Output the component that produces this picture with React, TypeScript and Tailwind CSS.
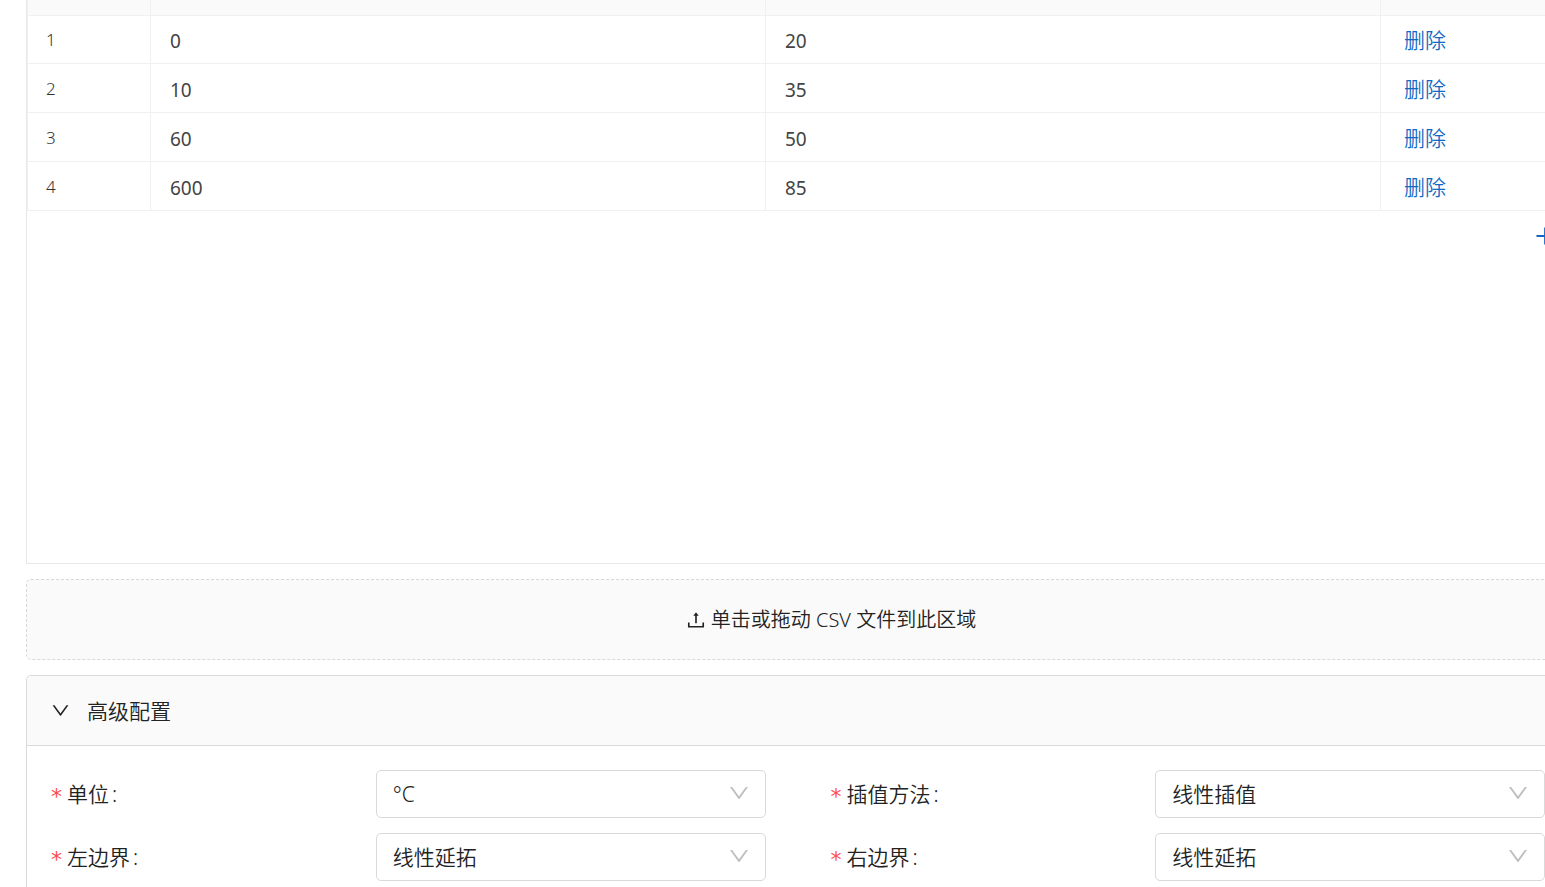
import { useState } from "react";
import { AiOutlineDown, AiOutlinePlus, AiOutlineUpload } from "react-icons/ai";

type Row = { id: number; x: string; y: string };

const initialRows: Row[] = [
  { id: 1, x: "0", y: "20" },
  { id: 2, x: "10", y: "35" },
  { id: 3, x: "60", y: "50" },
  { id: 4, x: "600", y: "85" },
];

const cell = "border-r border-b border-[#f0f0f0] p-0 text-left align-bottom";

function SelectField({ id, label, options }: { id: string; label: string; options: string[] }) {
  return (
    <div className="grid grid-cols-12 items-center">
      <label htmlFor={id} className="col-span-5 flex items-center text-[21px] leading-8">
        <span className="w-4 pt-1.5 font-['DejaVu_Sans'] text-[22px] leading-6 font-normal text-[#ff4d4f]">*</span>
        <span>{label}</span>
        <span className="pl-[3px]">:</span>
      </label>
      <div className="relative col-span-6">
        <select
          id={id}
          className="block h-12 w-full appearance-none rounded-[5px] border border-[#d9d9d9] bg-white pt-0.5 pr-12 pl-4 text-[21px]"
        >
          {options.map((o) => (
            <option key={o}>{o}</option>
          ))}
        </select>
        <AiOutlineDown className="pointer-events-none absolute top-[11px] right-[15px] size-6 text-[#bfbfbf]" />
      </div>
    </div>
  );
}

export default function App() {
  const [rows, setRows] = useState(initialRows);
  const [open, setOpen] = useState(true);

  return (
    <div className="h-screen overflow-hidden bg-white font-['Noto_Sans','Noto_Sans_CJK_SC',sans-serif] font-[350] text-[#222]">
      <main className="-mr-[90px] ml-[26px] flex flex-col gap-[15px]">
        <section className="min-h-[564px] border border-t-0 border-[#e8e8e8]">
          <table className="w-full table-fixed border-separate border-spacing-0 border-l border-[#f0f0f0]">
            <colgroup>
              <col className="w-[123px]" />
              <col />
              <col />
              <col className="w-[253px]" />
            </colgroup>
            <thead>
              <tr className="h-4 bg-[#fafafa]">
                <th className={cell} />
                <th className={cell} />
                <th className={cell} />
                <th className={cell} />
              </tr>
            </thead>
            <tbody>
              {rows.map((r, i) => (
                <tr key={r.id} className="h-[49px] first:h-12">
                  <td className={`${cell} pb-[9px] pl-[18px] text-[17px] leading-7 text-[#333]`}>{i + 1}</td>
                  <td className={`${cell} pb-2 pl-[19px] text-[19px] leading-7 font-normal text-[#444]`}>{r.x}</td>
                  <td className={`${cell} pb-2 pl-[19px] text-[19px] leading-7 font-normal text-[#444]`}>{r.y}</td>
                  <td className={`${cell} pb-[7px] pl-[23px]`}>
                    <button
                      type="button"
                      className="block text-[21px] leading-8 text-[#1268c3]"
                      onClick={() => setRows(rows.filter((o) => o.id !== r.id))}
                    >
                      删除
                    </button>
                  </td>
                </tr>
              ))}
            </tbody>
          </table>
          <div className="flex justify-end pt-[13px] pr-[77px]">
            <button
              type="button"
              aria-label="添加"
              className="text-[#1268c3]"
              onClick={() => setRows([...rows, { id: Date.now(), x: "0", y: "0" }])}
            >
              <AiOutlinePlus className="size-6" />
            </button>
          </div>
        </section>

        <button
          type="button"
          className="flex h-[81px] items-center justify-center gap-1 rounded-[5px] border border-dashed border-[#d9d9d9] bg-[#fafafa] text-xl"
        >
          <AiOutlineUpload className="size-[22px]" />
          <span>单击或拖动 CSV 文件到此区域</span>
        </button>

        <section className="rounded-t-[5px] border border-[#d9d9d9]">
          <button
            type="button"
            aria-expanded={open}
            onClick={() => setOpen(!open)}
            className="flex h-[70px] w-full items-center gap-4 rounded-t-[5px] border-b border-[#d9d9d9] bg-[#fafafa] px-[23px] text-[21px]"
          >
            <AiOutlineDown className="size-[21px]" />
            <span className="pt-0.5">高级配置</span>
          </button>
          {open && (
            <div className="grid grid-cols-2 gap-y-[15px] p-6">
              <SelectField id="unit" label="单位" options={["°C"]} />
              <SelectField id="method" label="插值方法" options={["线性插值"]} />
              <SelectField id="left" label="左边界" options={["线性延拓"]} />
              <SelectField id="right" label="右边界" options={["线性延拓"]} />
            </div>
          )}
        </section>
      </main>
    </div>
  );
}
